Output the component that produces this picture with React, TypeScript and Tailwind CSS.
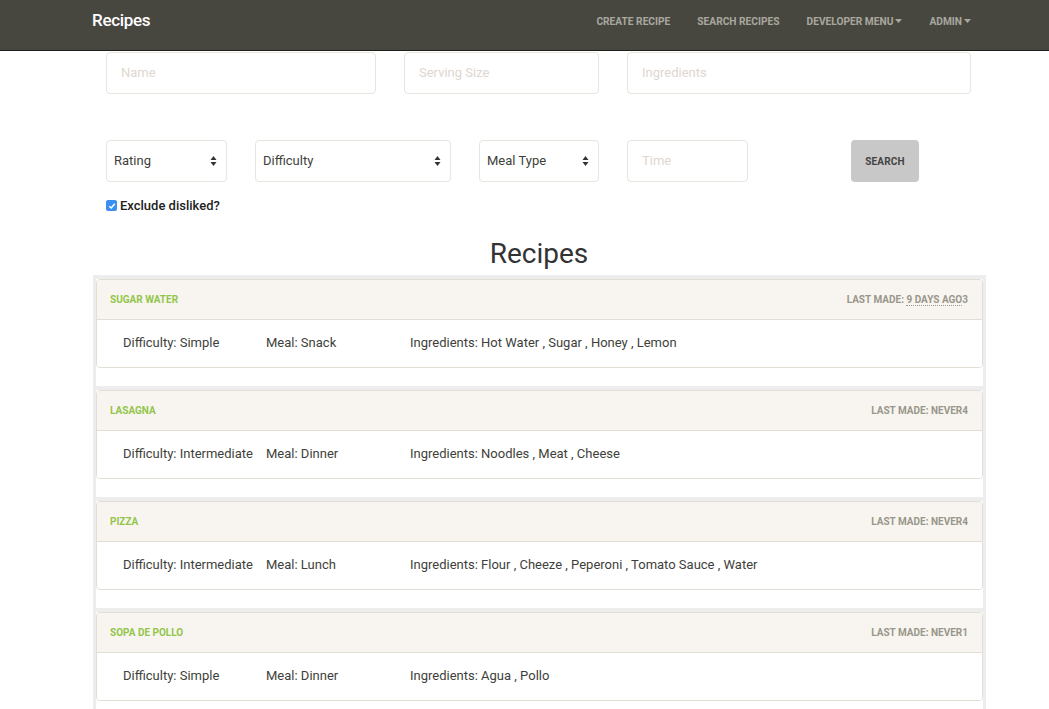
import React from "react";

const recipes = [
  { name: "Sugar Water", last: "9 DAYS AGO", lastU: true, n: "3", diff: "Simple", meal: "Snack", ing: "Hot Water , Sugar , Honey , Lemon" },
  { name: "Lasagna", last: "NEVER", lastU: false, n: "4", diff: "Intermediate", meal: "Dinner", ing: "Noodles , Meat , Cheese" },
  { name: "Pizza", last: "NEVER", lastU: false, n: "4", diff: "Intermediate", meal: "Lunch", ing: "Flour , Cheeze , Peperoni , Tomato Sauce , Water" },
  { name: "Sopa de Pollo", last: "NEVER", lastU: false, n: "1", diff: "Simple", meal: "Dinner", ing: "Agua , Pollo" },
];

function Caret() {
  return (
    <svg width="7" height="4" viewBox="0 0 7 4" className="ml-[2px] inline-block">
      <path d="M0 0 L7 0 L3.5 4 Z" fill="currentColor" />
    </svg>
  );
}

function UpDown() {
  return (
    <svg width="7" height="12" viewBox="0 0 7 12">
      <path d="M0.5 5 L6.5 5 L3.5 1 Z" fill="#333" />
      <path d="M0.5 7 L6.5 7 L3.5 11 Z" fill="#333" />
    </svg>
  );
}

function Select({ label, w }: { label: string; w: string }) {
  return (
    <div className={`${w} h-[42px] rounded-[4px] border border-[#e8e4de] bg-white flex items-center justify-between pl-[7px] pr-[9px] text-[13px] text-[#3e3f3a]`}>
      <span>{label}</span>
      <UpDown />
    </div>
  );
}

function Input({ ph, w }: { ph: string; w: string }) {
  return (
    <div className={`${w} h-[42px] rounded-[4px] border border-[#e8e4de] bg-white flex items-center pl-[14px] text-[13px] text-[#e0d6cf]`}>
      {ph}
    </div>
  );
}

export default function App() {
  return (
    <div className="min-h-[709px] bg-white font-['Roboto',sans-serif] text-[#3e3f3a]">
      <div className="h-[51px] bg-[#48473f] border-b border-[#1e1e1b] flex items-center pl-[92px] pr-[78px]">
        <div className="text-white text-[17px] font-medium tracking-[-0.3px]" style={{ marginTop: -8 }}>Recipes</div>
        <div className="flex-1" />
        <div className="flex items-center gap-[27px] text-[10.2px] font-bold text-[#a8a79f]" style={{ marginTop: -7 }}>
          <span>CREATE RECIPE</span>
          <span>SEARCH RECIPES</span>
          <span className="flex items-center">DEVELOPER MENU<Caret /></span>
          <span className="flex items-center">ADMIN<Caret /></span>
        </div>
      </div>

      <div className="pl-[106px]">
        <div className="flex gap-[28px] mt-[1px]">
          <Input ph="Name" w="w-[270px]" />
          <Input ph="Serving Size" w="w-[195px]" />
          <Input ph="Ingredients" w="w-[344px]" />
        </div>
        <div className="flex items-center mt-[46px]">
          <Select label="Rating" w="w-[121px]" />
          <div className="w-[28px]" />
          <Select label="Difficulty" w="w-[196px]" />
          <div className="w-[28px]" />
          <Select label="Meal Type" w="w-[120px]" />
          <div className="w-[28px]" />
          <Input ph="Time" w="w-[121px]" />
          <div className="w-[103px]" />
          <div className="w-[68px] h-[42px] rounded-[4px] bg-[#c8c8c8] flex items-center justify-center text-[10px] font-bold text-[#444] tracking-[0.2px]">SEARCH</div>
        </div>
        <div className="flex items-center mt-[14px] gap-[3px]">
          <div className="w-[11px] h-[11px] rounded-[2px] bg-[#3b8ff0] flex items-center justify-center">
            <svg width="8" height="8" viewBox="0 0 8 8"><path d="M1.3 4.2 L3.2 6 L6.8 1.8" stroke="white" strokeWidth="1.5" fill="none" /></svg>
          </div>
          <span className="text-[13px] font-medium text-[#222]">Exclude disliked?</span>
        </div>
      </div>

      <div className="text-center text-[28px] text-[#333] mt-[22px] leading-[32px] pl-[29px]">Recipes</div>

      <div className="ml-[93px] w-[893px] mt-[5px] bg-[#ededed] px-[3px] pt-[4px] flex flex-col gap-[4px]">
        {recipes.map((r) => (
          <div key={r.name} className="bg-white pb-[18px]">
            <div className="rounded-[4px] border border-[#e2ddd5] overflow-hidden">
              <div className="h-[40px] bg-[#f8f5f0] border-b border-[#e2ddd5] flex items-center justify-between pl-[13px] pr-[14px] text-[10px] font-bold">
                <span className="text-[#93c54b] uppercase">{r.name}</span>
                <span className="text-[#98978b]">
                  LAST MADE:{" "}
                  {r.lastU ? <span className="border-b border-dotted border-[#98978b]">{r.last}</span> : r.last}
                  {r.n}
                </span>
              </div>
              <div className="h-[47px] bg-white flex items-center pl-[26px] text-[13px] text-[#3e3f3a]">
                <span className="w-[143px]">Difficulty: {r.diff}</span>
                <span className="w-[144px]">Meal: {r.meal}</span>
                <span>Ingredients: {r.ing}</span>
              </div>
            </div>
          </div>
        ))}
      </div>
    </div>
  );
}
